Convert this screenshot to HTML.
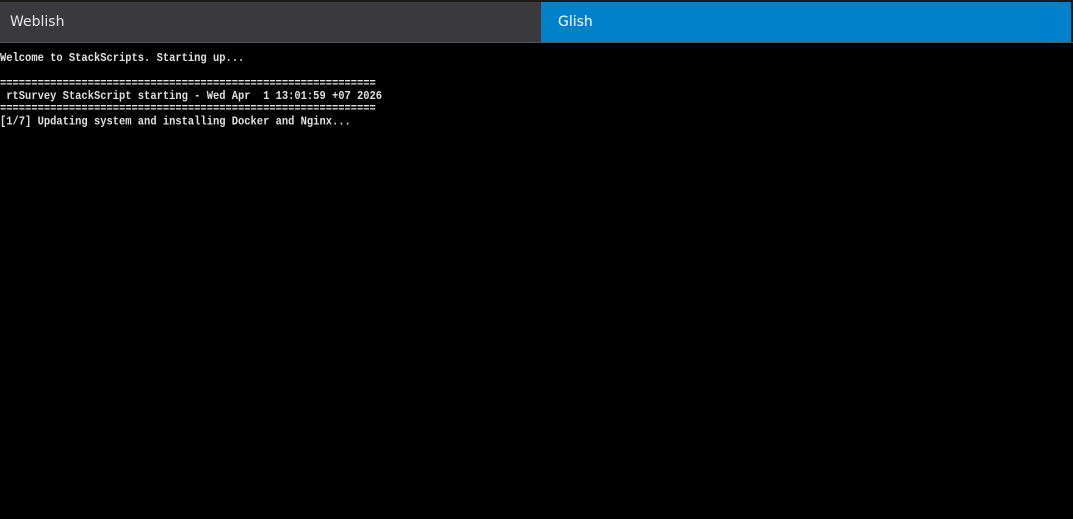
<!DOCTYPE html>
<html><head><style>
html,body{margin:0;padding:0;width:1073px;height:519px;background:#000;overflow:hidden}
.bar{position:absolute;left:0;top:0;width:1073px;height:43px;background:#1a1a1a}
.t1{position:absolute;left:0;top:2px;width:541px;height:40px;background:#3a393d;color:#e6e6e6;font:14px "DejaVu Sans","Liberation Sans",sans-serif;line-height:40px;text-indent:10px}
.t2{position:absolute;left:541px;top:2px;width:530px;height:40px;background:#0081cc;color:#fff;font:14px "DejaVu Sans","Liberation Sans",sans-serif;line-height:40px;text-indent:17px}
.line{position:absolute;left:0;top:42px;width:1073px;height:1px;background:#555}
pre{position:absolute;left:0;top:52.5px;margin:0;color:#e0e0e0;font:bold 10.45px "Liberation Mono",monospace;line-height:10.95px;transform:scaleY(1.15);transform-origin:0 0}
</style></head><body>
<div class="bar"></div>
<div class="t1">Weblish</div>
<div class="t2">Glish</div>
<div class="line"></div>
<pre>Welcome to StackScripts. Starting up...

============================================================
 rtSurvey StackScript starting - Wed Apr  1 13:01:59 +07 2026
============================================================
[1/7] Updating system and installing Docker and Nginx...</pre>
</body></html>
